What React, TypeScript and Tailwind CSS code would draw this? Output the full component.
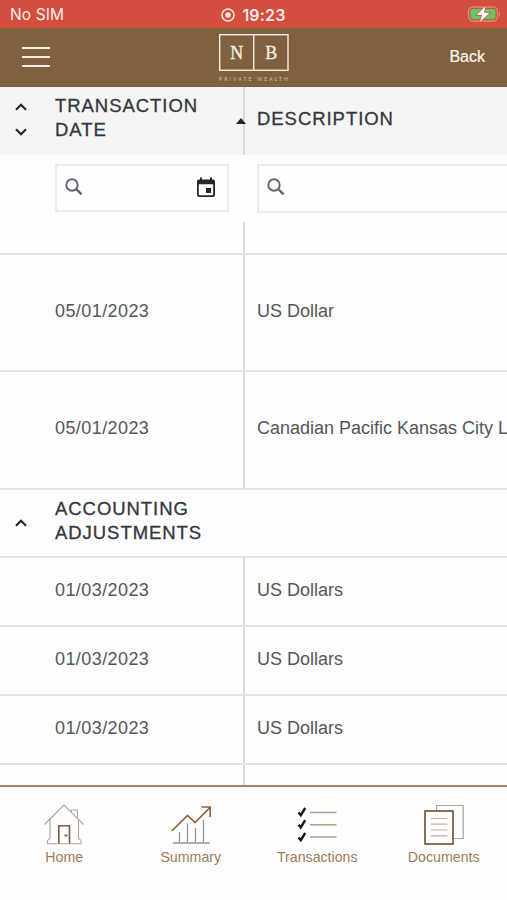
import React from 'react';

interface Row {
    date: string;
    description: string;
    height: string;
}

const transactions: Row[] = [
    { date: '05/01/2023', description: 'US Dollar', height: 'h-[117px]' },
    { date: '05/01/2023', description: 'Canadian Pacific Kansas City L', height: 'h-[118px]' },
];

const adjustments: Row[] = [
    { date: '01/03/2023', description: 'US Dollars', height: 'h-[69px]' },
    { date: '01/03/2023', description: 'US Dollars', height: 'h-[69px]' },
    { date: '01/03/2023', description: 'US Dollars', height: 'h-[69px]' },
];

const Chevron: React.FC<{ down?: boolean }> = ({ down }) => (
    <svg width="14" height="10" viewBox="0 0 14 10" fill="none" stroke="#25272d" strokeWidth="2.2">
        <path d={down ? 'M2 2.2 7 7.2 12 2.2' : 'M2 7.8 7 2.8 12 7.8'} />
    </svg>
);

const SearchIcon = () => (
    <svg width="18" height="18" viewBox="0 0 18 18" fill="none" stroke="#62686f">
        <circle cx="7" cy="7" r="5.7" strokeWidth="1.9" />
        <path d="M11.2 11.2 16.6 16.4" strokeWidth="2.4" />
    </svg>
);

const CalendarIcon = () => (
    <svg width="18" height="20" viewBox="0 0 18 20">
        <path
            fill="#25272d"
            fillRule="evenodd"
            d="M3 0.5h2v2h8v-2h2v2h1a2 2 0 0 1 2 2V18a2 2 0 0 1-2 2H2a2 2 0 0 1-2-2V4.5a2 2 0 0 1 2-2h1zM1.8 7.2V17.3a.9.9 0 0 0 .9.9H15.3a.9.9 0 0 0 .9-.9V7.2z"
        />
        <rect x="9" y="11" width="5" height="5" fill="#25272d" />
    </svg>
);

const HomeIcon = () => (
    <svg width="40" height="42" viewBox="0 0 40 42" fill="none" stroke="#a9a6a3" strokeWidth="1.1">
        <path d="M.5 20.5 20 1 39.500 20.5" />
        <path d="M27.5 8.5V6H33.5V14.500" />
        <path d="M6 15V34C6 35.5 3.5 35.500 3.5 37V39.8H37V37C37 35.500 34.500 35.500 34.500 34V15.500" />
        <path d="M14.8 39.5V21.8H25.5V39.5" stroke="#80583f" strokeWidth="1.6" />
        <path d="M20.500 31.500H23.500" stroke="#695548" strokeWidth="1.8" />
    </svg>
);

const SummaryIcon = () => (
    <svg width="40" height="42" viewBox="0 0 40 42" fill="none">
        <path d="M2 39H39M8.500 39V28M16.500 39V19.500M24.500 39V24M32.500 39V16" stroke="#969799" strokeWidth="1.3" />
        <path d="M.8 27 16.5 11.500 24 18.500 39 3.500M30.500 3H39.200V13" stroke="#89663b" strokeWidth="1.7" />
    </svg>
);

const TransactionsIcon = () => (
    <svg width="40" height="42" viewBox="0 0 40 42" fill="none">
        <path
            d="M1.5 8.500 3.800 11.200 8.200 4M1.5 20.700 3.800 23.400 8.200 16.200M1.5 33.500 3.800 36.200 8.200 29"
            stroke="#17181b"
            strokeWidth="2.4"
        />
        <path d="M13 8.500H39.5M13 20.700H39.5M13 33H39.5" stroke="#b69d88" strokeWidth="1.5" />
    </svg>
);

const DocumentsIcon = () => (
    <svg width="40" height="42" viewBox="0 0 40 42" fill="none">
        <path d="M12.500 6.500V1.500H39.200V34.500H29.500" stroke="#a3a3a3" strokeWidth="1.2" />
        <rect x="1" y="7" width="28" height="33" stroke="#7f6045" strokeWidth="1.8" />
        <path d="M7 14.500H23.5M7 20.200H23.5M7 26H23.5M7 31.800H23.5" stroke="#c1aca4" strokeWidth="1.2" />
    </svg>
);

const tabs = [
    { label: 'Home', icon: <HomeIcon /> },
    { label: 'Summary', icon: <SummaryIcon /> },
    { label: 'Transactions', icon: <TransactionsIcon /> },
    { label: 'Documents', icon: <DocumentsIcon /> },
];

const StatusBar = () => (
    <div className="grid h-7 shrink-0 grid-cols-3 items-center bg-[#d44e40] pt-0.5 font-[Inter,sans-serif] text-[#fcece8]">
        <span className="pl-[10px] text-[15.5px] tracking-[0.1px]">No SIM</span>
        <span className="flex items-center justify-center gap-[7px] text-[16px] font-semibold tracking-[0.2px]">
            <svg width="14" height="14" viewBox="0 0 14 14">
                <circle cx="7" cy="7" r="6" fill="none" stroke="#fcece8" strokeWidth="1.4" />
                <circle cx="7" cy="7" r="2.7" fill="#fcece8" />
            </svg>
            19:23
        </span>
        <svg className="mr-[6px] -mt-0.5 justify-self-end" width="34" height="18" viewBox="0 0 34 18">
            <rect x="1.5" y="2" width="29" height="14" rx="4.5" fill="none" stroke="#e08a72" strokeWidth="1.3" />
            <rect x="3.5" y="4" width="25" height="10" rx="2.5" fill="#62ca60" />
            <path d="M32 7c1.7.6 1.7 3.4 0 4z" fill="#e08a72" />
            <path
                d="M18.5 1 9.8 10H15L13 17 22.5 7.8H17z"
                fill="#fff"
                stroke="#d44e40"
                strokeWidth="1.4"
                paintOrder="stroke"
            />
        </svg>
    </div>
);

const Logo = () => (
    <svg width="72" height="50" viewBox="0 0 72 50" fill="#f7eee4">
        <rect x="1.7" y="1.7" width="68.3" height="35.6" fill="none" stroke="#f7eee4" strokeWidth="1.4" />
        <path d="M35.7 1.7V37.3" stroke="#f7eee4" strokeWidth="1.4" />
        <text x="18.8" y="25.5" fontSize="18" textAnchor="middle" fontFamily="'Liberation Serif', serif" stroke="#f7eee4" strokeWidth=".3">
            N
        </text>
        <text x="53.3" y="25.5" fontSize="18" textAnchor="middle" fontFamily="'Liberation Serif', serif" stroke="#f7eee4" strokeWidth=".3">
            B
        </text>
        <text x="1" y="48" fontSize="5" textLength="69" fontFamily="Lato, sans-serif" fill="#d6c4b0">
            PRIVATE WEALTH
        </text>
    </svg>
);

const TopBar = () => (
    <header className="grid h-[59px] shrink-0 grid-cols-3 items-center bg-[#80613f]">
        <button className="-mt-0.5 ml-[22px] flex w-7 flex-col gap-[7px]" aria-label="Menu">
            <span className="h-0.5 w-full bg-[#f7eee4]" />
            <span className="h-0.5 w-full bg-[#f7eee4]" />
            <span className="h-0.5 w-full bg-[#f7eee4]" />
        </button>
        <div className="flex justify-center pt-px">
            <Logo />
        </div>
        <button className="-mt-0.5 justify-self-end pr-[22px] text-[16px] text-[#fbf4ee] [-webkit-text-stroke:0.2px_#fbf4ee]">
            Back
        </button>
    </header>
);

const TableRow: React.FC<{ row: Row }> = ({ row }) => (
    <div className={`flex shrink-0 border-b-2 border-[#e2e2e2] text-[18px] text-[#55565a] ${row.height}`}>
        <div className="flex w-[245px] shrink-0 items-center border-r-2 border-[#dadada] pb-[3px] pl-[55px]">
            <span className="tracking-[0.42px]">{row.date}</span>
        </div>
        <div className="flex items-center pb-[3px] pl-3 whitespace-nowrap">{row.description}</div>
    </div>
);

const App: React.FC = () => {
    return (
        <div className="flex h-[900px] w-[507px] flex-col overflow-hidden bg-[#fdfdfd] font-['Liberation_Sans',sans-serif]">
            <StatusBar />
            <TopBar />

            {/* Column headings */}
            <div className="flex h-[68px] shrink-0 bg-[#f5f5f5] text-[18.5px] leading-6 tracking-[0.95px] text-[#34363c] [-webkit-text-stroke:0.3px_#34363c]">
                <div className="relative flex w-[245px] shrink-0 border-r-2 border-[#dadada] pt-[7px]">
                    <div className="flex w-[55px] flex-col items-center gap-[15px] pt-2 pr-[13px]">
                        <Chevron />
                        <Chevron down />
                    </div>
                    <span className="w-[160px]">TRANSACTION DATE</span>
                    <svg className="absolute top-[31px] left-[236px]" width="10" height="6" viewBox="0 0 10 6">
                        <path d="M0 6 5 0 10 6z" fill="#25272d" />
                    </svg>
                </div>
                <div className="flex items-center pb-[5px] pl-3">DESCRIPTION</div>
            </div>

            {/* Filters */}
            <div className="flex h-[67px] shrink-0 overflow-hidden pt-[9px] pl-[55px]">
                <div className="flex h-[48px] w-[174px] shrink-0 items-center justify-between border-2 border-[#ebebeb] pr-3 pb-0.5 pl-2">
                    <SearchIcon />
                    <CalendarIcon />
                </div>
                <div className="ml-7 flex h-[49px] w-[280px] shrink-0 items-center border-2 border-[#ebebeb] pb-[3px] pl-2">
                    <SearchIcon />
                </div>
            </div>

            {/* Rows */}
            <div className="flex min-h-0 flex-1 flex-col overflow-hidden">
                <div className="h-[33px] shrink-0 border-b-2 border-[#e2e2e2]">
                    <div className="h-full w-[245px] border-r-2 border-[#dadada]" />
                </div>
                {transactions.map((row, i) => (
                    <TableRow key={i} row={row} />
                ))}
                <div className="flex h-[68px] shrink-0 border-b-2 border-[#e2e2e2] text-[18.5px] leading-6 tracking-[0.95px] text-[#34363c] [-webkit-text-stroke:0.3px_#34363c]">
                    <div className="flex w-[55px] items-center justify-center pr-[13px]">
                        <Chevron />
                    </div>
                    <span className="w-[180px] pt-[7px]">ACCOUNTING ADJUSTMENTS</span>
                </div>
                {adjustments.map((row, i) => (
                    <TableRow key={i} row={row} />
                ))}
                <div className="w-[245px] flex-1 border-r-2 border-[#dadada]" />
            </div>

            {/* Bottom navigation */}
            <nav className="grid h-[115px] shrink-0 grid-cols-4 border-t-2 border-[#a08670] pt-[17px] pl-px">
                {tabs.map((tab) => (
                    <a key={tab.label} className="flex flex-col items-center text-[14.2px] leading-[22px] text-[#9b7c5e]">
                        {tab.icon}
                        <span>{tab.label}</span>
                    </a>
                ))}
            </nav>
        </div>
    );
};

export default App;
